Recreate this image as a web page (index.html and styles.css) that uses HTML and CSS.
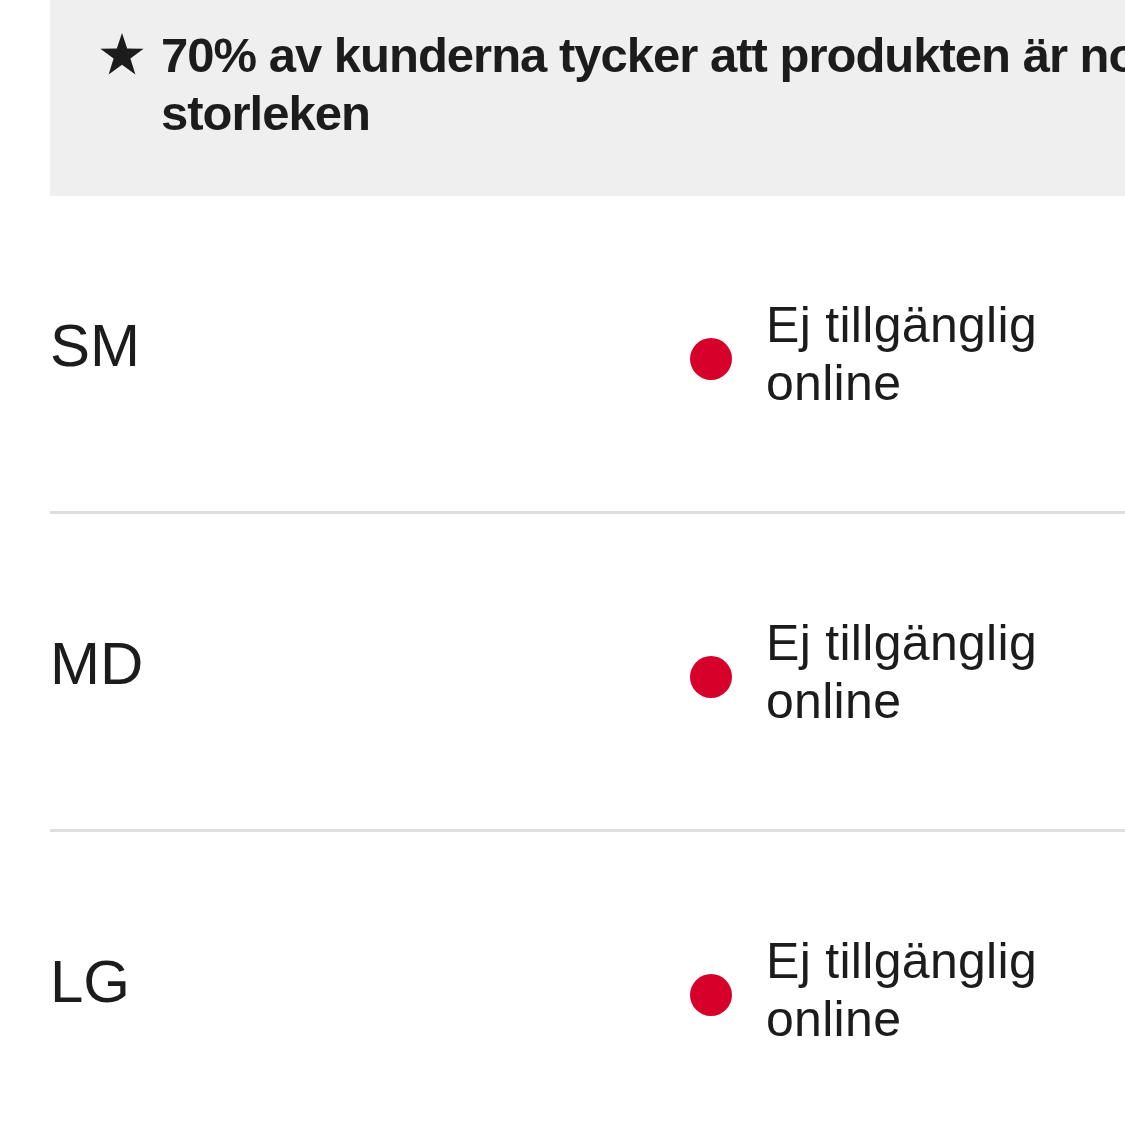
FILE: index.html
```html
<!DOCTYPE html>
<html lang="sv">
<head>
  <meta charset="UTF-8" />
  <meta name="viewport" content="width=device-width, initial-scale=1" />
  <title>Storlekar</title>
  <link rel="stylesheet" href="styles.css">
</head>
<body>
  <div class="panel">
    <div class="fit-note">
      <span class="star">
        <svg width="44" height="42" viewBox="0 0 44 42"><path d="M22 0 L27.2 15.6 L43.6 15.8 L30.4 25.6 L35.4 41.4 L22 31.8 L8.6 41.4 L13.6 25.6 L0.4 15.8 L16.8 15.6 Z" fill="#1c1c1c"/></svg>
      </span>
      <p class="fit-text">70% av kunderna tycker att produkten är normal i storleken</p>
    </div>

    <div class="size-row">
      <div class="size-label">SM</div>
      <span class="dot"></span>
      <div class="stock">Ej tillgänglig<br>online</div>
    </div>
    <div class="size-row">
      <div class="size-label">MD</div>
      <span class="dot"></span>
      <div class="stock">Ej tillgänglig<br>online</div>
    </div>
    <div class="size-row">
      <div class="size-label">LG</div>
      <span class="dot"></span>
      <div class="stock">Ej tillgänglig<br>online</div>
    </div>
  </div>
</body>
</html>
```

FILE: styles.css
```css
body {
  margin: 0;
  font-family: 'Liberation Sans', Arial, sans-serif;
  background: #fff;
  color: #1c1c1c;
  overflow: hidden;
}

/* the panel is wider than the window, like the cropped original */
.panel {
  margin-left: 50px;
  width: 1320px;
}

.fit-note {
  display: flex;
  align-items: flex-start;
  background: #efefef;
  padding: 26px 0 54px 50px;
  height: 116px;
}

.star {
  width: 61px;
  flex-shrink: 0;
  padding-top: 7px;
  line-height: 0;
}

.fit-text {
  margin: 0;
  font-size: 49px;
  font-weight: bold;
  letter-spacing: -1px;
  line-height: 58px;
  width: 1150px;
}

.size-row {
  display: flex;
  align-items: center;
  height: 305px;
  padding-top: 10px;
  border-top: 3px solid #dedede;
}

.fit-note + .size-row {
  border-top: none;
}

.size-label {
  width: 640px;
  flex-shrink: 0;
  font-size: 60px;
  padding-bottom: 27px;
}

.dot {
  width: 42px;
  height: 42px;
  border-radius: 50%;
  background: #d6002b;
  margin-right: 34px;
  flex-shrink: 0;
}

.stock {
  font-size: 50px;
  line-height: 58px;
  letter-spacing: 0.3px;
  margin-bottom: 9px;
}
```
